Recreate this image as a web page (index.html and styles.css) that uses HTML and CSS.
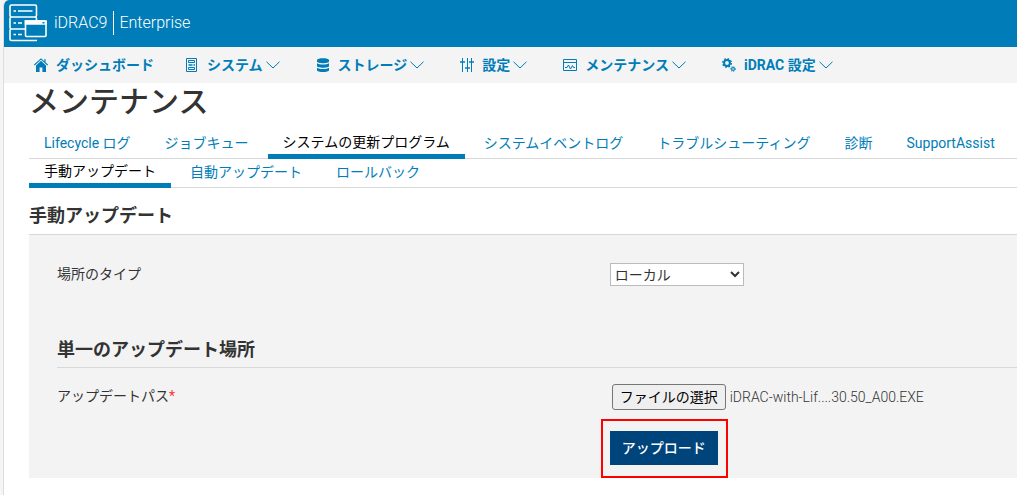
FILE: index.html
```html
<!DOCTYPE html>
<html lang="ja">
<head>
    <meta charset="UTF-8">
    <meta name="viewport" content="width=device-width, initial-scale=1.0">
    <title>iDRAC9 - メンテナンス</title>
    <link rel="stylesheet" href="styles.css">
</head>
<body>
    <div class="page">
        <header class="header">
            <svg class="logo" viewBox="0 0 38 38" fill="none" stroke="#fff" stroke-width="1.6">
                <path d="M16 25H2.500Q1 25 1 23.500V14.500Q1 13 2.500 13H26Q27.500 13 27.500 14.500V17M2.500 13Q1 13 1 11.500V2.500Q1 1 2.500 1H26Q27.500 1 27.500 2.500V11.500Q27.500 13 26 13M2.500 25Q1 25 1 26.500V35Q1 36.500 2.500 36.500H28"/>
                <path d="M4.500 7h2.500M9 7h14.500M4.500 19h2.500M9 19h4M4.500 30.500h2.500M9 30.500h4"/>
                <path d="M16.500 17H36Q37 17 37 18V31.500Q37 32.500 36 32.500H17.500Q16.500 32.500 16.500 31.500Z" fill="#007db8"/>
                <path d="M16.500 17H37V20H16.500Z" fill="#fff"/>
                <path d="M33.500 18.800h2" stroke="#007db8"/>
            </svg>
            <span class="product">iDRAC9</span>
            <span class="edition">Enterprise</span>
        </header>

        <nav class="main-nav">
            <ul>
                <li><a href="#dashboard">
                    <svg class="icon" viewBox="0 0 14 14" fill="#007db8"><path d="M7 2.8 2 7.4V14h3.6V9.5h2.8V14H12V7.4Z"/><path d="M.3 7 7 .9 13.7 7M11 1v3" fill="none" stroke="#007db8" stroke-width="1.1"/></svg>
                    ダッシュボード
                </a></li>
                <li><a href="#system">
                    <svg class="icon" viewBox="0 0 14 14" fill="none" stroke="#007db8"><path d="M1.5.5h10v13h-10Z"/><path d="M3.5 2.5h6v2h-6ZM3.5 9.5h6v2h-6Z"/><path d="M3.500 7h4M8.500 7h1.500" stroke-width="1.600"/></svg>
                    システム
                    <svg class="chevron" viewBox="0 0 14 8"><path d="M.5.8 7 7 13.5.8"/></svg>
                </a></li>
                <li><a href="#storage">
                    <svg class="icon" viewBox="0 0 14 14" fill="#007db8"><path d="M1 2.2C1-.3 13-.3 13 2.2v1.2c0 2.3-12 2.3-12 0Z"/><path d="M1 5.3c2 1.6 10 1.6 12 0v2.6c0 2.3-12 2.3-12 0Z"/><path d="M1 9.8c2 1.6 10 1.6 12 0v2.4c0 2.4-12 2.4-12 0Z"/></svg>
                    ストレージ
                    <svg class="chevron" viewBox="0 0 14 8"><path d="M.5.8 7 7 13.5.8"/></svg>
                </a></li>
                <li><a href="#settings">
                    <svg class="icon" viewBox="0 0 14 14" fill="none" stroke="#007db8"><path d="M2.5 0v14M7.5 0v14M11.5 0v14"/><path d="M0 4h5M5 10h5M9 4h5" stroke-width="1.6"/></svg>
                    設定
                    <svg class="chevron" viewBox="0 0 14 8"><path d="M.5.8 7 7 13.5.8"/></svg>
                </a></li>
                <li><a href="#maintenance">
                    <svg class="icon" viewBox="0 0 14 14" fill="none" stroke="#007db8"><path d="M.5 1.5h13v11H.5ZM.5 4.5h13"/><path d="M2 9.5h2L5.5 7l2 4L9.5 7.500l1 2H12"/></svg>
                    メンテナンス
                    <svg class="chevron" viewBox="0 0 14 8"><path d="M.5.8 7 7 13.5.8"/></svg>
                </a></li>
                <li><a href="#idrac">
                    <svg class="icon" viewBox="0 0 14 14" fill="none" stroke="#007db8"><circle cx="5" cy="5" r="2.900" stroke-width="2"/><circle cx="5" cy="5" r="4.300" stroke-width="1.400" stroke-dasharray="1.700 1.677"/><circle cx="11" cy="11" r="1.400" stroke-width="1.100"/><circle cx="11" cy="11" r="2.400" stroke-width="1" stroke-dasharray="1 1.154"/></svg>
                    iDRAC 設定
                    <svg class="chevron" viewBox="0 0 14 8"><path d="M.5.8 7 7 13.5.8"/></svg>
                </a></li>
            </ul>
        </nav>

        <main class="content">
            <h1>メンテナンス</h1>

            <div class="tabs">
                <a href="#lifecycle">Lifecycle ログ</a>
                <a href="#jobs">ジョブキュー</a>
                <a href="#update" class="active">システムの更新プログラム</a>
                <a href="#events">システムイベントログ</a>
                <a href="#trouble">トラブルシューティング</a>
                <a href="#diag">診断</a>
                <a href="#support">SupportAssist</a>
            </div>
            <div class="tabs">
                <a href="#manual" class="active">手動アップデート</a>
                <a href="#auto">自動アップデート</a>
                <a href="#rollback">ロールバック</a>
            </div>

            <h2>手動アップデート</h2>
            <form class="panel">
                <div class="row">
                    <label for="location">場所のタイプ</label>
                    <div>
                        <select id="location">
                            <option selected>ローカル</option>
                            <option>HTTP</option>
                            <option>HTTPS</option>
                        </select>
                    </div>
                </div>

                <h3>単一のアップデート場所</h3>
                <div class="row">
                    <label for="choose">アップデートパス<span class="required">*</span></label>
                    <div class="file">
                        <input type="file" id="file" hidden>
                        <button type="button" id="choose" class="choose" onclick="document.getElementById('file').click()">ファイルの選択</button>
                        <span class="filename">iDRAC-with-Lif....30.50_A00.EXE</span>
                    </div>
                </div>
                <div class="row actions">
                    <button type="button" class="upload">アップロード</button>
                </div>
            </form>
        </main>
    </div>
</body>
</html>
```
FILE: styles.css
```css
* {
    box-sizing: border-box;
}

body {
    margin: 0;
    padding-left: 3px;
    background-color: #f5f5f5;
    color: #333;
    font-family: Roboto, "Noto Sans CJK JP", sans-serif;
    font-size: 14px;
    line-height: 20px;
}

a {
    color: #007db8;
    text-decoration: none;
}

.page {
    min-height: 100vh;
    background-color: white;
    border-left: 1px solid #ddd;
    border-top-left-radius: 6px;
    overflow: hidden;
}

/* Header */
.header {
    display: flex;
    align-items: center;
    height: 47px;
    padding: 0 5px 2px;
    background-color: #007db8;
    color: white;
    font-size: 16px;
    font-weight: 300;
}

.logo {
    width: 38px;
    height: 38px;
    margin-right: 7px;
}

.product {
    padding-right: 6px;
    border-right: 1px solid white;
    line-height: 24px;
}

.edition {
    padding-left: 5px;
}

/* Main navigation */
.main-nav {
    background-color: #f4f4f4;
}

.main-nav ul {
    display: flex;
    gap: 31px;
    margin: 0;
    padding: 8px 30px;
    list-style: none;
}

.main-nav a {
    display: flex;
    align-items: center;
    font-weight: 700;
    white-space: nowrap;
}

.icon {
    width: 14px;
    height: 14px;
    margin-right: 8px;
}

.chevron {
    width: 14px;
    height: 8px;
    margin: 0 5px 0 3px;
    fill: none;
    stroke: #007db8;
}

/* Page content */
.content {
    padding-left: 25px;
}

h1 {
    margin: 0;
    font-size: 30px;
    font-weight: 500;
    line-height: 38px;
}

.tabs {
    display: flex;
    align-items: flex-end;
    gap: 4px;
    height: 29px;
    border-bottom: 1px solid #d8d8d8;
    white-space: nowrap;
}

h1 + .tabs {
    height: 38px;
}

.tabs a {
    margin-bottom: -1px;
    padding: 0 15px 6px;
}

.tabs .active {
    padding-bottom: 2px;
    border-bottom: 5px solid #007db8;
    color: black;
}

h2, h3 {
    margin: 0;
    font-size: 18px;
    font-weight: 700;
    line-height: 28px;
    border-bottom: 1px solid #d8d8d8;
}

h2 {
    padding: 14px 0 4px;
}

.panel {
    padding: 28px 0 13px 28px;
    background-color: #f3f3f3;
}

.row {
    display: grid;
    grid-template-columns: 19fr 14fr;
    align-items: center;
}

.row label {
    padding-bottom: 2px;
}

h3 {
    margin-top: 50px;
    margin-bottom: 16px;
    padding-bottom: 3px;
}

select {
    display: block;
    width: 134px;
    height: 23px;
    border: 1px solid #bbb;
    background-color: white;
    color: #333;
    font: inherit;
}

.required {
    color: #f33;
}

.file {
    display: flex;
    align-items: center;
    gap: 4px;
    padding-left: 2px;
    white-space: nowrap;
}

.choose {
    height: 26px;
    padding: 0 7px;
    border: 1px solid #767676;
    border-radius: 3px;
    background-color: #efefef;
    color: black;
    font: inherit;
}

.filename {
    font-weight: 300;
}

.actions {
    margin-top: 21px;
}

.upload {
    position: relative;
    grid-column: 2;
    justify-self: start;
    height: 34px;
    padding: 0 12px;
    border: none;
    background-color: #00447c;
    color: white;
    font: inherit;
    font-weight: 500;
}

.upload::after {
    content: "";
    position: absolute;
    inset: -12px -10px -13px -9px;
    border: 2px solid red;
}
```
